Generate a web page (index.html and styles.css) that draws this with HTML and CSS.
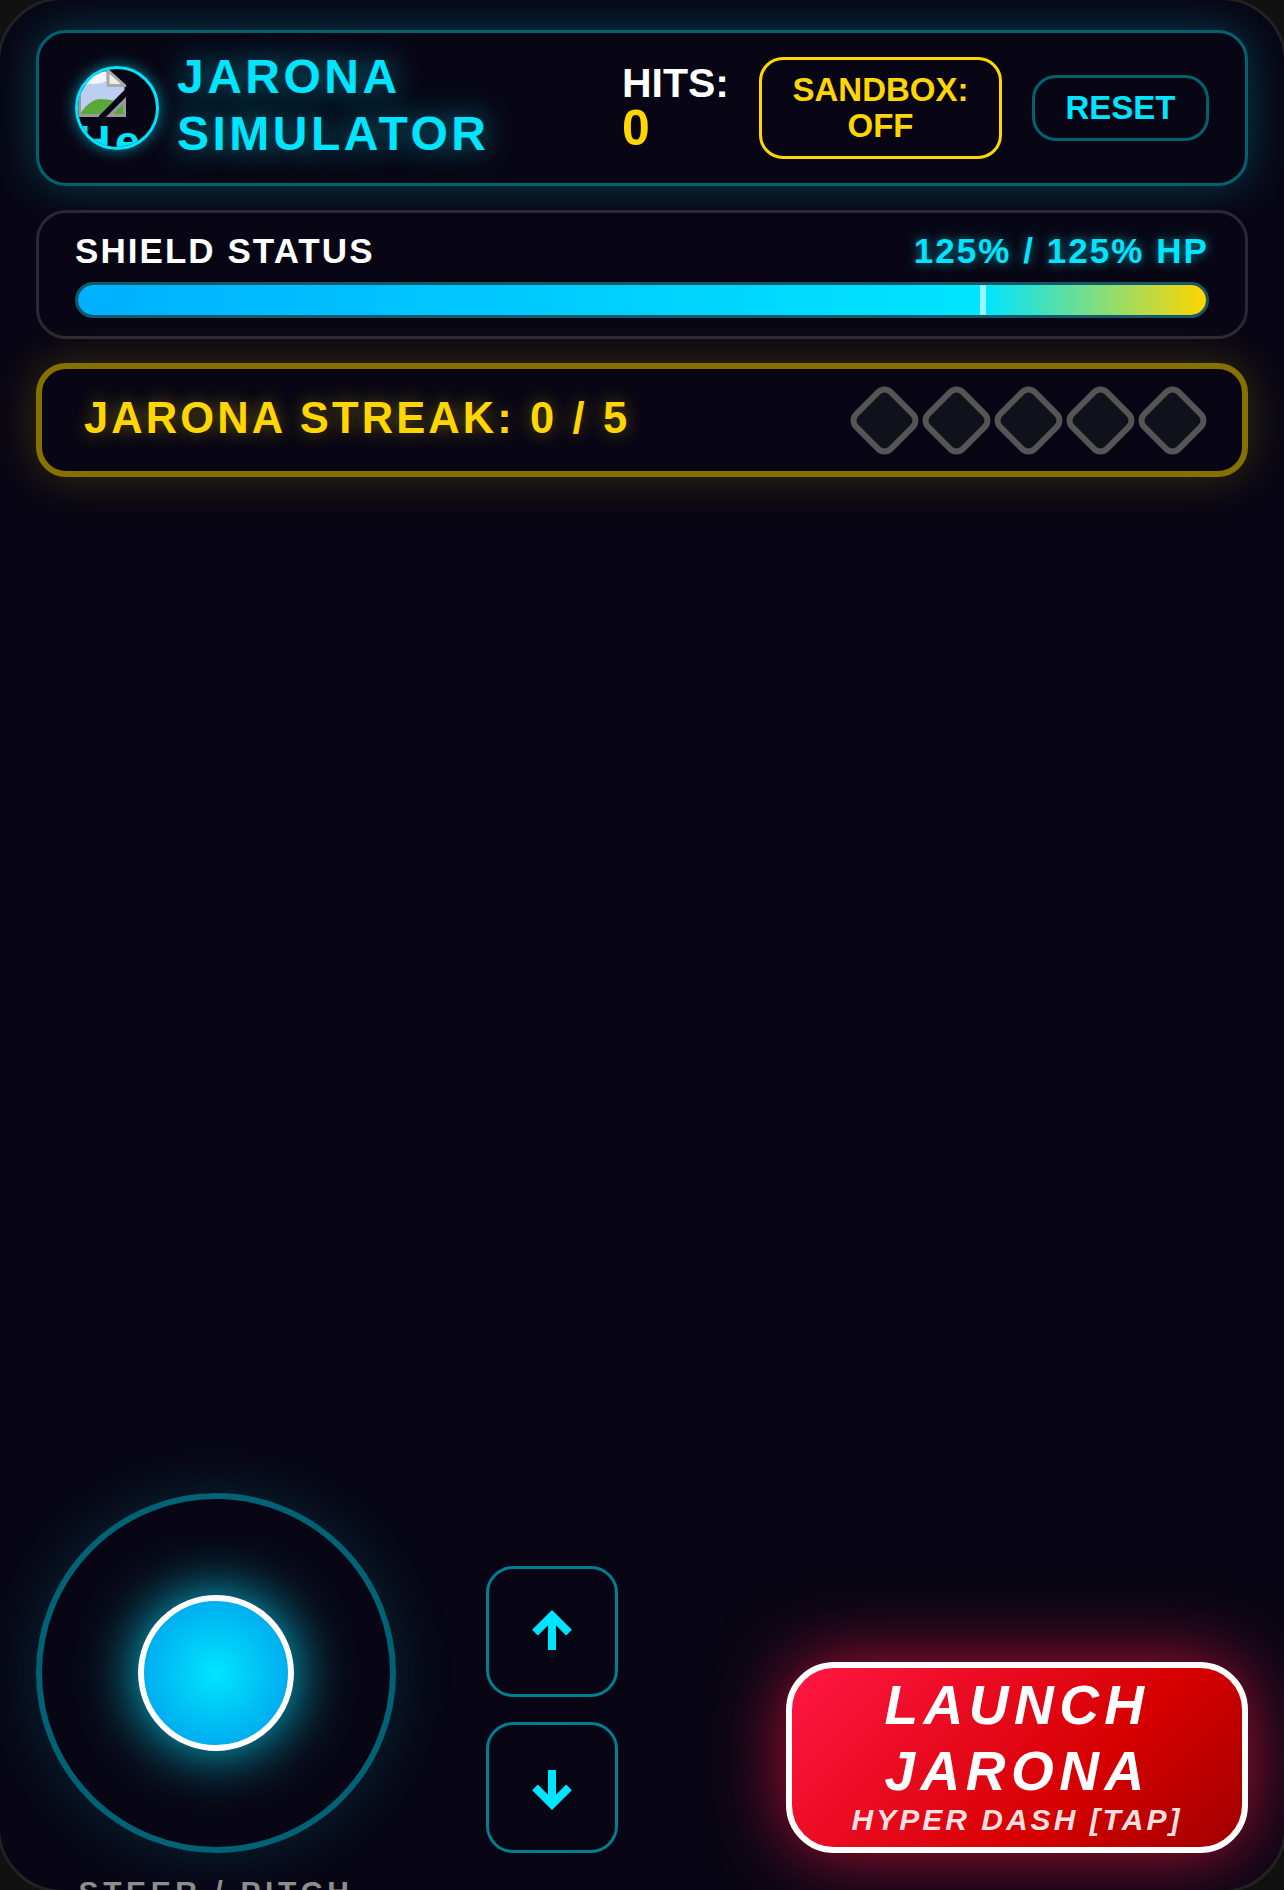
FILE: index.html
```html
<!DOCTYPE html>
<html lang="en">
<head>
    <meta charset="UTF-8">
    <meta name="viewport" content="width=device-width, initial-scale=1.0">
    <title>Jarona Simulator</title>
    <link rel="stylesheet" href="styles.css">
</head>
<body>
    <div class="frame">
        <header class="panel topbar">
            <div class="brand">
                <div class="logo">
                    <!-- broken image placeholder -->
                    <svg class="logo-icon" viewBox="0 0 16 16" width="48" height="48">
                        <path d="M.5 .5H10V5.5H15.5V7L7 15.5H.5Z" fill="#bccff0"/>
                        <path d="M1 1H9.5V4C7 5.5 4 4.5 1 5.5Z" fill="#f2f5fd"/>
                        <path d="M1 15V14.5Q4 10 7.5 10Q10 10 12 10.5L7.5 15Z" fill="#5aa83a"/>
                        <path d="M7 15.5H.5V.5H10" fill="none" stroke="#9a9a9a"/>
                        <path d="M10 .5L15.5 5.5H10Z" fill="#eeeeee" stroke="#a8a8a8"/>
                        <path d="M15.5 10.5V15.5H10.5Z" fill="#5aa83a" stroke="#9a9a9a"/>
                    </svg>
                    <span class="logo-alt">He</span>
                </div>
                <h1>JARONA SIMULATOR</h1>
            </div>
            <div class="hits">HITS:<span class="hits-count">0</span></div>
            <button class="btn-sandbox">SANDBOX: OFF</button>
            <button class="btn-reset">RESET</button>
        </header>

        <section class="panel shield">
            <div class="shield-row">
                <span>SHIELD STATUS</span>
                <span class="shield-value">125% / 125% HP</span>
            </div>
            <div class="bar">
                <div class="bar-base"></div>
                <div class="bar-over"></div>
            </div>
        </section>

        <section class="streak">
            <span class="streak-text">JARONA STREAK: 0 / 5</span>
            <div class="gems">
                <div class="gem"></div>
                <div class="gem"></div>
                <div class="gem"></div>
                <div class="gem"></div>
                <div class="gem"></div>
            </div>
        </section>

        <div class="controls">
            <div class="steer">
                <div class="stick-col">
                    <div class="stick">
                        <div class="knob"></div>
                    </div>
                    <div class="stick-label">STEER / PITCH</div>
                </div>
                <div class="pitch">
                    <button class="btn-pitch">
                        <svg viewBox="0 0 48 48" width="48" height="48"><path d="M24 42V8M7 24.7L24 7.7L41 24.7" fill="none" stroke="#00e5ff" stroke-width="8"/></svg>
                    </button>
                    <button class="btn-pitch">
                        <svg viewBox="0 0 48 48" width="48" height="48"><path d="M24 6V40M7 23.3L24 40.3L41 23.3" fill="none" stroke="#00e5ff" stroke-width="8"/></svg>
                    </button>
                </div>
            </div>
            <button class="btn-launch">
                LAUNCH JARONA
                <span class="launch-sub">HYPER DASH [TAP]</span>
            </button>
        </div>
    </div>
</body>
</html>
```
FILE: styles.css
```css
html, body {
    margin: 0;
    padding: 0;
    height: 100%;
    overflow: hidden;
    background: #111111;
}
body {
    font-family: "Liberation Sans", Arial, sans-serif;
    font-weight: bold;
    color: #fff;
}
button {
    font-family: inherit;
    font-weight: bold;
    background: #080614;
    cursor: pointer;
}
.frame {
    box-sizing: border-box;
    width: 1290px;
    height: 1896px;
    margin: -3px;
    display: flex;
    flex-direction: column;
    gap: 24px;
    padding: 30px 36px 37px;
    background: #080614;
    border: 3px solid #222222;
    border-radius: 66px;
    overflow: hidden;
}
.panel {
    box-sizing: border-box;
    background: #080614;
    border: 3px solid #2c2833;
    border-radius: 30px;
}
.topbar {
    height: 156px;
    flex-shrink: 0;
    display: flex;
    align-items: center;
    gap: 30px;
    padding: 0 36px;
    border-color: #00616f;
    box-shadow: 0 0 45px rgba(0, 229, 255, 0.25);
}
.brand {
    display: flex;
    align-items: center;
    gap: 18px;
    flex: 1;
}
.logo {
    box-sizing: border-box;
    width: 84px;
    height: 84px;
    flex-shrink: 0;
    border: 3px solid #00e5ff;
    border-radius: 50%;
    overflow: hidden;
    box-shadow: 0 0 15px rgba(0, 229, 255, 0.6);
}
.logo-icon {
    display: block;
}
.logo-alt {
    display: block;
    font-size: 45px;
    line-height: 50px;
    letter-spacing: 4.5px;
    color: #00e5ff;
}
h1 {
    margin: 0 0 6px;
    width: 340px;
    font-size: 48px;
    line-height: 57px;
    letter-spacing: 3.5px;
    color: #00e5ff;
    text-shadow: 0 0 30px rgba(0, 229, 255, 0.6);
}
.hits {
    font-size: 41px;
    line-height: 40px;
}
.hits-count {
    display: block;
    font-size: 50px;
    line-height: 50px;
    color: #ffd600;
}
.btn-sandbox {
    box-sizing: border-box;
    width: 243px;
    height: 102px;
    padding: 0 30px;
    font-size: 33px;
    line-height: 36px;
    color: #ffd600;
    border: 3px solid #ffd600;
    border-radius: 24px;
}
.btn-reset {
    box-sizing: border-box;
    width: 177px;
    height: 66px;
    padding: 0;
    font-size: 33px;
    color: #00e5ff;
    border: 3px solid #00616f;
    border-radius: 24px;
}
.shield {
    height: 129px;
    flex-shrink: 0;
    padding: 19px 36px 18px;
}
.shield-row {
    display: flex;
    justify-content: space-between;
    font-size: 35px;
    line-height: 38px;
    letter-spacing: 2.05px;
    margin-bottom: 12px;
}
.shield-value {
    color: #00e5ff;
    text-shadow: 0 0 12px rgba(0, 229, 255, 0.6);
}
.bar {
    box-sizing: border-box;
    height: 36px;
    display: flex;
    border: 3px solid #14586a;
    border-radius: 18px;
    overflow: hidden;
}
.bar-base {
    width: 80%;
    background: linear-gradient(90deg, #00b0ff, #00e5ff);
    border-right: 6px solid #99f5ff;
}
.bar-over {
    flex: 1;
    background: linear-gradient(90deg, #00e5ff, #ffd600);
}
.streak {
    box-sizing: border-box;
    height: 114px;
    flex-shrink: 0;
    display: flex;
    align-items: center;
    justify-content: space-between;
    padding: 0 42px;
    background: #080614;
    border: 6px solid #857000;
    border-radius: 30px;
    box-shadow: 0 0 45px rgba(255, 214, 0, 0.2);
}
.streak-text {
    padding-bottom: 4px;
    font-size: 43.5px;
    letter-spacing: 3.1px;
    color: #ffd600;
    text-shadow: 0 0 18px rgba(255, 214, 0, 0.4);
}
.gems {
    display: flex;
    gap: 17px;
}
.gem {
    box-sizing: border-box;
    width: 55px;
    height: 55px;
    background: #10111a;
    border: 6px solid #555555;
    border-radius: 12px;
    transform: rotate(45deg);
}
.controls {
    margin-top: auto;
    display: flex;
    align-items: flex-end;
    justify-content: space-between;
}
.steer {
    display: flex;
    align-items: flex-end;
    gap: 90px;
}
.stick-col {
    width: 360px;
    height: 360px;
}
.stick {
    box-sizing: border-box;
    width: 360px;
    height: 360px;
    display: flex;
    align-items: center;
    justify-content: center;
    border: 6px solid #006375;
    border-radius: 50%;
    box-shadow: 0 0 60px rgba(0, 229, 255, 0.15);
}
.knob {
    box-sizing: border-box;
    width: 156px;
    height: 156px;
    background: radial-gradient(circle closest-side, #00e5ff, #00aef0);
    border: 6px solid #fff;
    border-radius: 50%;
    box-shadow: 0 0 60px rgba(0, 229, 255, 0.9);
}
.stick-label {
    margin-top: 22px;
    text-align: center;
    font-size: 30px;
    letter-spacing: 4.6px;
    color: #8e8e8e;
}
.pitch {
    display: flex;
    flex-direction: column;
    gap: 25px;
}
.btn-pitch {
    box-sizing: border-box;
    width: 132px;
    height: 131px;
    display: flex;
    align-items: center;
    justify-content: center;
    padding: 0;
    border: 3px solid #007f94;
    border-radius: 27px;
}
.btn-launch {
    box-sizing: border-box;
    width: 462px;
    height: 191px;
    padding: 0 60px 7px;
    font-size: 55px;
    line-height: 66px;
    font-style: italic;
    letter-spacing: 5.5px;
    color: #fff;
    background: linear-gradient(135deg, #ff1744, #d50000 65%, #a00000);
    border: 6px solid #fff;
    border-radius: 48px;
    box-shadow: 0 0 75px rgba(255, 23, 68, 0.7);
}
.launch-sub {
    display: block;
    font-size: 30px;
    line-height: 32px;
    letter-spacing: 3px;
    white-space: nowrap;
    margin: 0 -30px;
    color: rgba(255, 255, 255, 0.9);
}
```
